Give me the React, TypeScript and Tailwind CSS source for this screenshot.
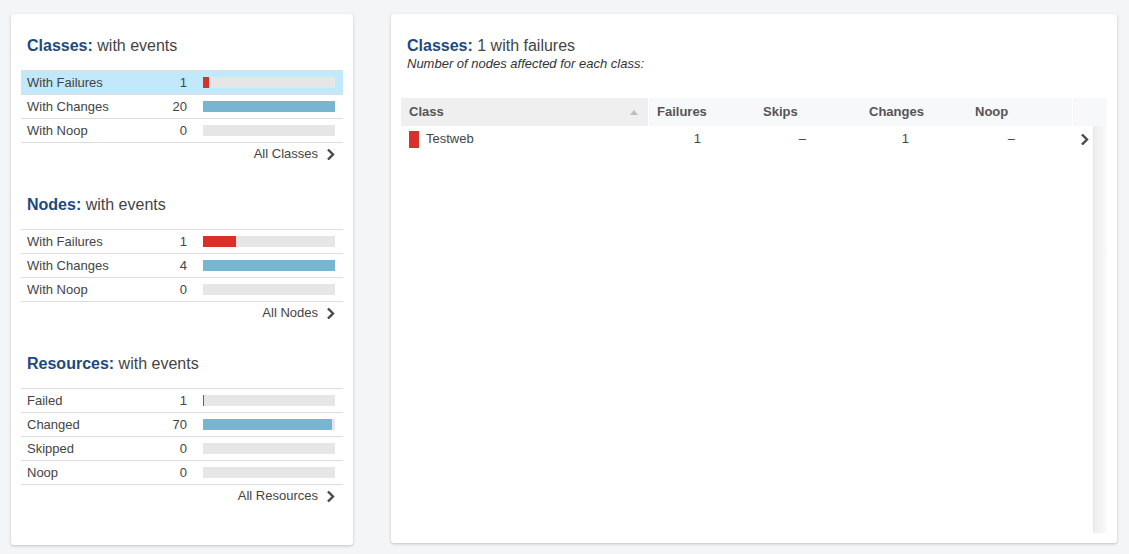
import React from "react";

const Chevron = ({ className = "" }: { className?: string }) => (
  <svg width="8" height="11" viewBox="0 0 8 11" className={className}>
    <path d="M1.8 1.3 L6 5.5 L1.8 9.7" fill="none" stroke="#4a4a4a" strokeWidth="2.4" strokeLinecap="square" />
  </svg>
);

type Row = { label: string; count: number; color: "red" | "blue"; width: number; highlight?: boolean };

const Section = ({ title, rows, link }: { title: string; rows: Row[]; link: string }) => (
  <div className="mb-[29px]">
    <div className="px-[6px] h-[20px] leading-[21px] text-[16px] text-[#444] mb-[15px]">
      <span className="font-bold text-[#1c4a80]">{title}:</span> with events
    </div>
    <div className="border-t border-[#dddddd]">
      {rows.map((r) => (
        <div
          key={r.label}
          className={`h-[24px] border-b border-[#dddddd] flex items-center pl-[6px] pr-[8px] text-[13px] text-[#444] ${r.highlight ? "bg-[#c1e8fb]" : ""}`}
        >
          <div className="flex-1">{r.label}</div>
          <div className="mr-[16px] text-right">{r.count}</div>
          <div className="w-[132px] h-[11px] bg-[#e6e6e6] flex">
            <div
              className={r.color === "red" ? "bg-[#d9302a] h-full" : "bg-[#78b5d1] h-full"}
              style={{ width: r.width }}
            />
          </div>
        </div>
      ))}
    </div>
    <div className="h-[22px] flex items-center justify-end pr-[8px] gap-[9px] text-[13px] text-[#444]">
      <span>{link}</span>
      <Chevron />
    </div>
  </div>
);

export default function App() {
  return (
    <div
      className="w-[1129px] h-[554px] bg-[#f4f5f6] flex items-start pt-[14px] pl-[11px] gap-[38px] overflow-hidden"
      style={{ fontFamily: '"Liberation Sans", Arial, sans-serif' }}
    >
      <div className="w-[342px] h-[531px] bg-white rounded-[3px] shadow-[0_1px_3px_rgba(0,0,0,0.22)] px-[10px] pt-[21px]">
        <Section
          title="Classes"
          link="All Classes"
          rows={[
            { label: "With Failures", count: 1, color: "red", width: 6, highlight: true },
            { label: "With Changes", count: 20, color: "blue", width: 132 },
            { label: "With Noop", count: 0, color: "blue", width: 0 },
          ]}
        />
        <Section
          title="Nodes"
          link="All Nodes"
          rows={[
            { label: "With Failures", count: 1, color: "red", width: 33 },
            { label: "With Changes", count: 4, color: "blue", width: 132 },
            { label: "With Noop", count: 0, color: "blue", width: 0 },
          ]}
        />
        <Section
          title="Resources"
          link="All Resources"
          rows={[
            { label: "Failed", count: 1, color: "red", width: 1 },
            { label: "Changed", count: 70, color: "blue", width: 129 },
            { label: "Skipped", count: 0, color: "blue", width: 0 },
            { label: "Noop", count: 0, color: "blue", width: 0 },
          ]}
        />
      </div>

      <div className="w-[726px] h-[529px] bg-white rounded-[3px] shadow-[0_1px_3px_rgba(0,0,0,0.22)] px-[10px] pt-[21px] flex flex-col">
        <div className="px-[6px] h-[20px] leading-[21px] text-[16px] text-[#444]">
          <span className="font-bold text-[#1c4a80]">Classes:</span> 1 with failures
        </div>
        <div className="px-[6px] h-[16px] leading-[16px] text-[13px] italic text-[#333] mt-[1px]">
          Number of nodes affected for each class:
        </div>
        <div className="mt-[26px] flex h-[28px] text-[13px] font-bold text-[#555]">
          <div className="w-[248px] bg-[#efefef] flex items-center pl-[8px] pr-[10px] border-r border-white">
            <span className="flex-1">Class</span>
            <svg width="8" height="5" viewBox="0 0 8 5">
              <path d="M0 5 L4 0 L8 5 Z" fill="#bdbdbd" />
            </svg>
          </div>
          <div className="w-[106px] bg-[#f7f8f9] flex items-center pl-[8px]">Failures</div>
          <div className="w-[106px] bg-[#f7f8f9] flex items-center pl-[8px]">Skips</div>
          <div className="w-[106px] bg-[#f7f8f9] flex items-center pl-[8px]">Changes</div>
          <div className="w-[106px] bg-[#f7f8f9] flex items-center pl-[8px] border-r border-white">Noop</div>
          <div className="w-[34px] bg-[#f7f8f9]" />
        </div>
        <div className="flex flex-1 pb-[10px]">
          <div className="flex-1">
            <div className="flex h-[26px] items-center text-[13px] text-[#444]">
              <div className="w-[248px] flex items-center pl-[8px]">
                <div className="w-[10px] h-[17px] bg-[#d9302a] mr-[7px]" />
                <span>Testweb</span>
              </div>
              <div className="w-[106px] text-right pr-[54px]">1</div>
              <div className="w-[106px] text-right pr-[55px]">–</div>
              <div className="w-[106px] text-right pr-[58px]">1</div>
              <div className="w-[106px] text-right pr-[58px]">–</div>
              <div className="flex-1 flex items-center pl-[8px]">
                <Chevron />
              </div>
            </div>
          </div>
          <div className="w-[14px] border-l border-[#e6e6e6] bg-gradient-to-r from-[#ededed] to-[#fafafa]" />
        </div>
      </div>
    </div>
  );
}
